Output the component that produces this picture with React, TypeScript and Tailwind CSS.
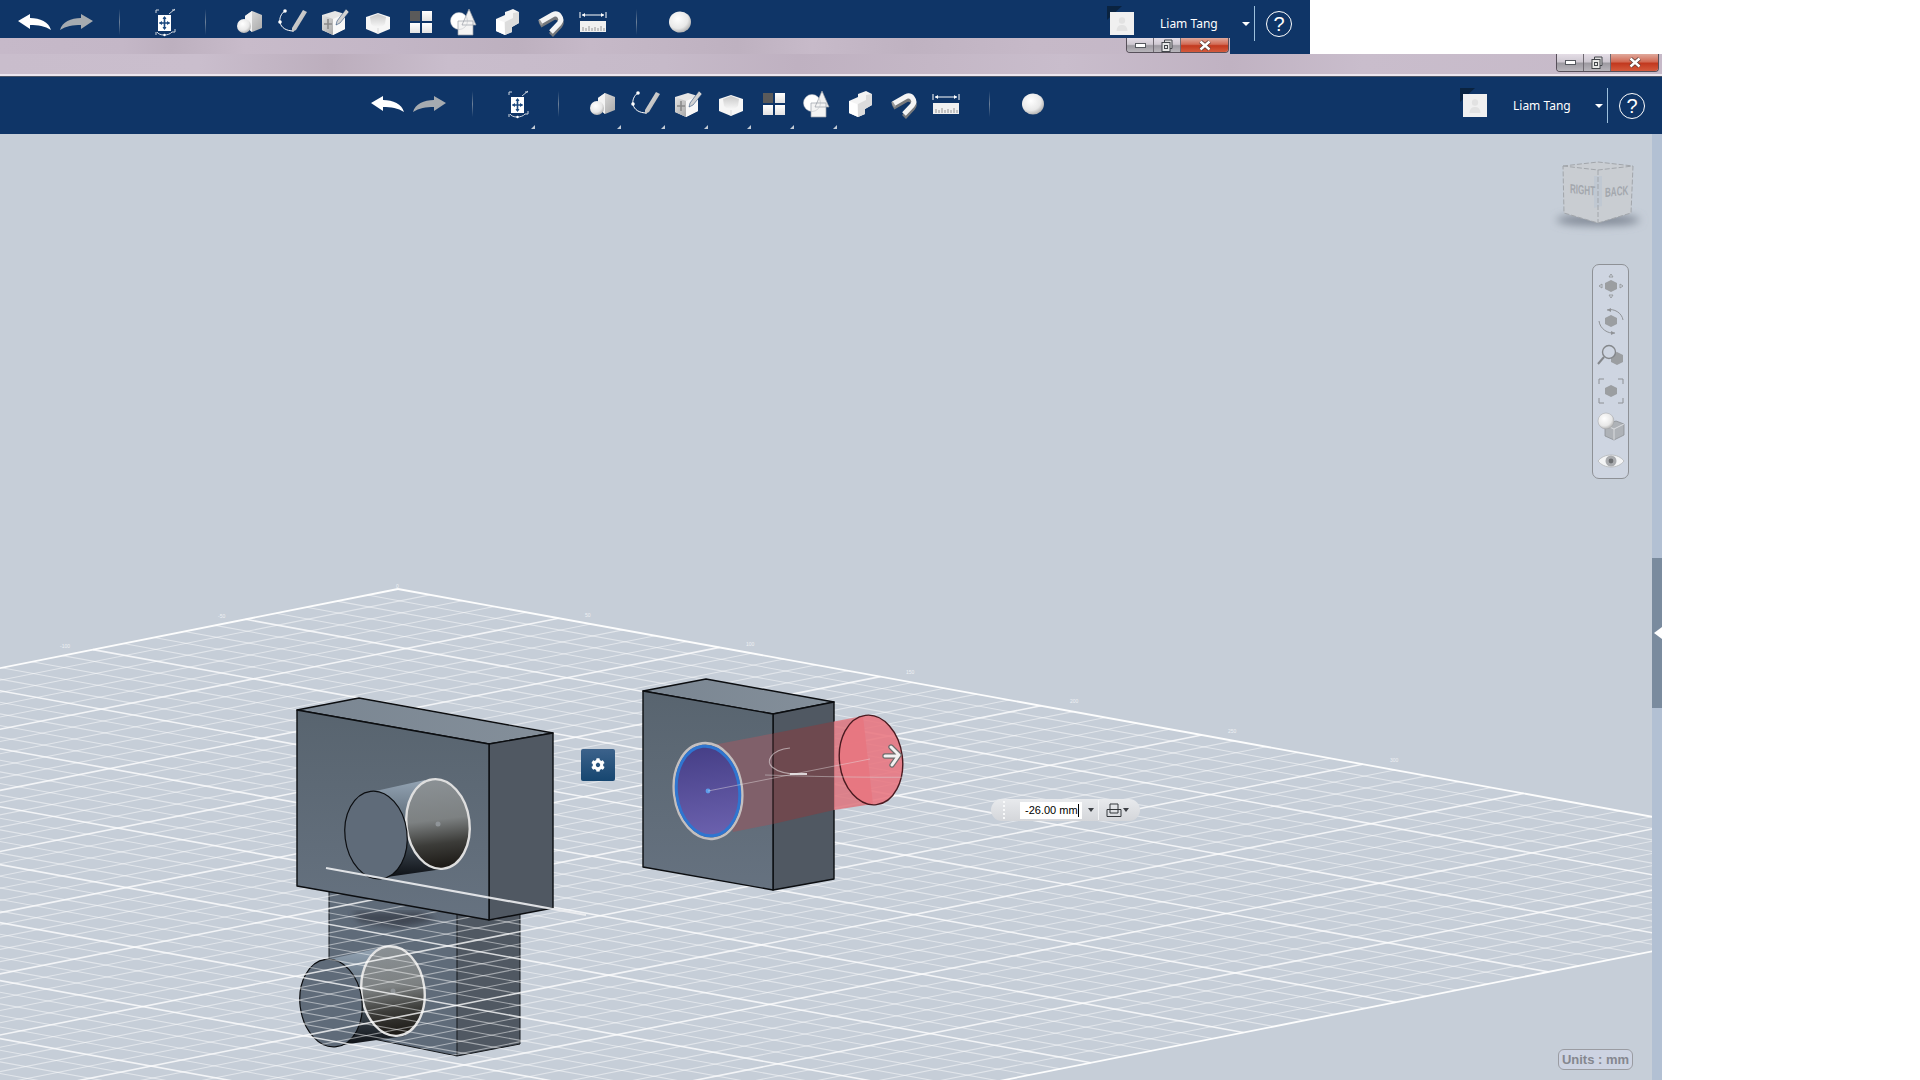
import { FaCog } from "react-icons/fa";

const A = { x: 398, y: 589 };
const U = { x: 160.8, y: 29.2 };
const V = { x: -152.5, y: 30.3 };

function gridPoint(s: number, t: number) {
  return { x: A.x + s * U.x + t * V.x, y: A.y + s * U.y + t * V.y };
}

type GridLine = { x1: number; y1: number; x2: number; y2: number; kind: number };

const gridLines: GridLine[] = [];
for (let i = 0; i <= 50; i++) {
  const kind = i === 0 || i === 50 ? 2 : i % 5 === 0 ? 1 : 0;
  const a = gridPoint(i / 5, 0);
  const b = gridPoint(i / 5, 10);
  gridLines.push({ x1: a.x, y1: a.y, x2: b.x, y2: b.y, kind });
  const c = gridPoint(0, i / 5);
  const d = gridPoint(10, i / 5);
  gridLines.push({ x1: c.x, y1: c.y, x2: d.x, y2: d.y, kind });
}
gridLines.sort((l, r) => l.kind - r.kind);

const gridLabels = [
  { x: 60, y: 648, text: "-100" },
  { x: 218, y: 618, text: "-50" },
  { x: 396, y: 588, text: "0" },
  { x: 585, y: 617, text: "50" },
  { x: 746, y: 646, text: "100" },
  { x: 906, y: 674, text: "150" },
  { x: 1070, y: 703, text: "200" },
  { x: 1228, y: 733, text: "250" },
  { x: 1390, y: 762, text: "300" },
];

function SharedDefs() {
  return (
    <svg className="absolute h-0 w-0">
      <defs>
        <linearGradient id="ico" x1="0" y1="0" x2="0" y2="1">
          <stop offset="0" stopColor="#ffffff" />
          <stop offset="1" stopColor="#e2e2e2" />
        </linearGradient>
        <linearGradient id="icoSide" x1="0" y1="0" x2="1" y2="1">
          <stop offset="0" stopColor="#e4e4e4" />
          <stop offset="1" stopColor="#a8a8a8" />
        </linearGradient>
        <linearGradient id="cavity" x1="0" y1="0" x2="0" y2="1">
          <stop offset="0" stopColor="#c8c8c8" />
          <stop offset="1" stopColor="#f6f6f6" />
        </linearGradient>
        <radialGradient id="ball" cx="0.4" cy="0.35" r="0.7">
          <stop offset="0" stopColor="#ffffff" />
          <stop offset="0.65" stopColor="#e8e8e8" />
          <stop offset="1" stopColor="#a9a9a9" />
        </radialGradient>
      </defs>
    </svg>
  );
}

function Ico({ children }: { children: React.ReactNode }) {
  return (
    <svg width="36" height="36" viewBox="0 0 36 36">
      {children}
    </svg>
  );
}

const UndoIcon = () => (
  <Ico>
    <path d="M2 17L14 10V14C24 14 33 18 35 26C29 22 22 21 14 21V25Z" fill="#ffffff" />
  </Ico>
);

const RedoIcon = () => (
  <Ico>
    <path d="M34 17L22 10V14C12 14 3 18 1 26C7 22 14 21 22 21V25Z" fill="#a6abb0" />
  </Ico>
);

const HomeIcon = () => (
  <Ico>
    <g transform="translate(2 0)">
      <path d="M9 9V6H12M25 6H28M22 10L28 5M28 25V28H25M9 28V31" fill="none" stroke="#cfd6df" strokeWidth="1" />
      <rect x="11" y="11" width="13" height="16" fill="#ffffff" />
      <path d="M17.5 13V25M12.5 19H22.5" stroke="#1d4a80" strokeWidth="1.6" />
      <path d="M17.5 12L15.5 15H19.5ZM17.5 26L15.5 23H19.5ZM12 19L15 17V21ZM23 19L20 17V21Z" fill="#1d4a80" />
      <path d="M10 28C12 32 22 32 25 28" fill="none" stroke="#cfd6df" strokeWidth="1" />
      <circle cx="17.5" cy="31" r="1.2" fill="#ffffff" />
    </g>
  </Ico>
);

const PrimitiveIcon = () => (
  <Ico>
    <path d="M21 7L31 11V24L21 28L14 22V12Z" fill="url(#icoSide)" />
    <path d="M21 7L14 12V22L21 28Z" fill="#f4f4f4" />
    <circle cx="13" cy="22" r="7" fill="url(#ball)" />
  </Ico>
);

const SketchIcon = () => (
  <Ico>
    <path d="M11 7C3 12 3 27 20 27" fill="none" stroke="#ffffff" strokeWidth="1" />
    <circle cx="11" cy="7" r="1.8" fill="#ffffff" />
    <circle cx="6" cy="18" r="1.8" fill="#ffffff" />
    <path d="M29 6L33 8L22 26L18 28L18 24Z" fill="url(#icoSide)" />
  </Ico>
);

const ConstructIcon = () => (
  <Ico>
    <path d="M5 11L18 7L28 10V25L16 31L5 26Z" fill="#e6e6e6" />
    <path d="M5 11L16 15V31L5 26Z" fill="url(#icoSide)" />
    <path d="M16 15L28 10V25L16 31Z" fill="#f8f8f8" />
    <path d="M11 15V25M7 20H15" stroke="#8a8a8a" strokeWidth="1.6" />
    <path d="M29 5L32 8L23 19L19 21L20 17Z" fill="#d2d2d2" stroke="#0f3567" strokeWidth="0.5" />
  </Ico>
);

const ModifyIcon = () => (
  <Ico>
    <path d="M6 13L18 9L30 13V25L18 30L6 25Z" fill="#f6f6f6" />
    <path d="M10 13L18 10L26 13L25 20C22 24 14 24 11 20Z" fill="url(#cavity)" />
    <path d="M18 30V24" stroke="#dadada" strokeWidth="1" />
  </Ico>
);

const PatternIcon = () => (
  <Ico>
    <rect x="7" y="7" width="10" height="10" fill="#5a5a5a" />
    <rect x="19" y="7" width="10" height="10" fill="url(#ico)" />
    <rect x="7" y="19" width="10" height="10" fill="url(#ico)" />
    <rect x="19" y="19" width="10" height="10" fill="url(#ico)" />
  </Ico>
);

const CombineIcon = () => (
  <Ico>
    <circle cx="13" cy="17" r="8.5" fill="#ffffff" />
    <path d="M23 5L30 21H16Z" fill="#f0f0f0" />
    <rect x="12" y="17" width="15" height="14" fill="#f4f4f4" />
    <path d="M23 5L30 21H16ZM12 17H27V31H12Z" fill="none" stroke="#9a9ea6" strokeWidth="0.7" />
    <circle cx="13" cy="17" r="8.5" fill="none" stroke="#b8bcc2" strokeWidth="0.5" />
  </Ico>
);

const GroupIcon = () => (
  <Ico>
    <path d="M6 15L15 11V8L23 5L29 8V19L22 23V28L15 31L6 27Z" fill="#f4f4f4" />
    <path d="M23 9L29 8V19L22 23V28L15 31V18L23 14Z" fill="#dcdcdc" />
    <path d="M6 15L14 18L15 31L6 27Z" fill="#ffffff" />
  </Ico>
);

const SnapIcon = () => (
  <Ico>
    <path d="M7 19L20 11.5A5.5 5.5 0 0 1 26.5 20L18 29" fill="none" stroke="#77797c" strokeWidth="5.5" transform="translate(0 2)" />
    <path d="M7 18L20 10.5A5.5 5.5 0 0 1 26.5 19L18 28" fill="none" stroke="#f4f4f4" strokeWidth="5" />
    <path d="M6 16L9 21" stroke="#9a9a9a" strokeWidth="2" />
  </Ico>
);

const MeasureIcon = () => (
  <Ico>
    <path d="M4 8V14M30 8V14M6 11H28" stroke="#ffffff" strokeWidth="1" />
    <path d="M6 11L9 9V13ZM28 11L25 9V13Z" fill="#ffffff" />
    <rect x="4" y="17" width="26" height="11" fill="#f0f0f0" />
    <path d="M7 27V23M10 27V24M13 27V22M16 27V24M19 27V23M22 27V24M25 27V22M28 27V24" stroke="#7d7d7d" strokeWidth="0.8" />
  </Ico>
);

const MaterialIcon = () => (
  <Ico>
    <ellipse cx="18" cy="18" rx="11" ry="10.5" fill="url(#ball)" />
  </Ico>
);

function Tool({ children, marker }: { children: React.ReactNode; marker?: boolean }) {
  return (
    <div className="relative flex h-full w-[43.1px] shrink-0 items-center justify-center">
      {children}
      {marker && (
        <div className="absolute left-[37px] top-[calc(50%+21px)] h-0 w-0 border-b-[4px] border-l-[4px] border-b-[#c4ccd6] border-l-transparent" />
      )}
    </div>
  );
}

function Sep() {
  return (
    <div className="flex h-full w-[43.1px] shrink-0 items-center justify-center">
      <div className="h-[26px] w-px bg-[linear-gradient(to_bottom,#0f3567,#6c8099_50%,#0f3567)]" />
    </div>
  );
}

function Tools({ markers }: { markers: boolean }) {
  return (
    <>
      <Tool><UndoIcon /></Tool>
      <Tool><RedoIcon /></Tool>
      <Sep />
      <Tool marker={markers}><HomeIcon /></Tool>
      <Sep />
      <Tool marker={markers}><PrimitiveIcon /></Tool>
      <Tool marker={markers}><SketchIcon /></Tool>
      <Tool marker={markers}><ConstructIcon /></Tool>
      <Tool marker={markers}><ModifyIcon /></Tool>
      <Tool marker={markers}><PatternIcon /></Tool>
      <Tool marker={markers}><CombineIcon /></Tool>
      <Tool><GroupIcon /></Tool>
      <Tool><SnapIcon /></Tool>
      <Tool><MeasureIcon /></Tool>
      <Sep />
      <Tool><MaterialIcon /></Tool>
    </>
  );
}

function UserMenu() {
  return (
    <div className="ml-auto flex items-center">
      <div className="relative h-[23px] w-[24px]">
        <div className="absolute -top-[6px] -left-[3px] h-0 w-0 border-t-[14px] border-r-[15px] border-t-[#0a2340] border-r-transparent" />
        <div className="absolute inset-0 flex items-center justify-center bg-[#f0f0f0]">
          <svg width="14" height="18" viewBox="0 0 14 18">
            <circle cx="7" cy="5.5" r="3.2" fill="#e2e2e2" />
            <path d="M1.5 16C2 11 4 10 7 10C10 10 12 11 12.5 16Z" fill="#e2e2e2" />
          </svg>
        </div>
      </div>
      <span className="ml-[26px] w-[60px] whitespace-nowrap font-['Noto_Sans',sans-serif] text-[12px] text-white">
        Liam Tang
      </span>
      <div className="ml-[22px] h-0 w-0 border-x-[4px] border-t-[4px] border-x-transparent border-t-white" />
      <div className="ml-[4px] h-[35px] w-px bg-[#9cc0dc]" />
      <div className="ml-[11px] flex h-[26px] w-[26px] items-center justify-center rounded-full border border-white font-['Liberation_Sans',sans-serif] text-[20px] leading-none text-white">
        ?
      </div>
    </div>
  );
}

function WinButtons({ height }: { height: string }) {
  return (
    <div className={`flex ${height} overflow-hidden rounded-b-[4px] border-x border-b border-[#57505a]`}>
      <div className="flex w-[27px] items-center justify-center border-r border-[#6f6a72] bg-[linear-gradient(to_bottom,#e4dde6,#cfc9d2_45%,#9d9aa1_55%,#b9b6bc)]">
        <div className="h-[5px] w-[11px] border border-[#55585e] bg-white" />
      </div>
      <div className="flex w-[27px] items-center justify-center border-r border-[#6f6a72] bg-[linear-gradient(to_bottom,#e4dde6,#cfc9d2_45%,#9d9aa1_55%,#b9b6bc)]">
        <svg width="12" height="13" viewBox="0 0 12 13">
          <path d="M3.5 3V1H11V9.5H9" fill="#ddd" stroke="#44474c" />
          <rect x="1" y="3.5" width="8" height="9" fill="#e8e8e8" stroke="#44474c" />
          <rect x="3.5" y="6.5" width="3" height="3" fill="none" stroke="#44474c" />
        </svg>
      </div>
      <div className="flex w-[47px] items-center justify-center bg-[linear-gradient(to_bottom,#e0a99c,#d26b55_45%,#c2391f_55%,#d45a3c)]">
        <svg width="14" height="11" viewBox="0 0 14 11">
          <path d="M2.5 1.5L11.5 9.5M11.5 1.5L2.5 9.5" stroke="#5a3a35" strokeWidth="4" />
          <path d="M2.5 1.5L11.5 9.5M11.5 1.5L2.5 9.5" stroke="#ffffff" strokeWidth="2.4" />
        </svg>
      </div>
    </div>
  );
}

function Box({ front, top, right }: { front: string; top: string; right: string }) {
  return (
    <g stroke="#0b0d10" strokeWidth="1.4" strokeLinejoin="round">
      <polygon points={top} fill="url(#boxTop)" />
      <polygon points={right} fill="#505862" />
      <polygon points={front} fill="url(#boxFront)" />
    </g>
  );
}

function Scene() {
  return (
    <svg className="block h-full w-full" viewBox="0 134 1652 946">
      <defs>
        <linearGradient id="boxFront" x1="0" y1="0" x2="0" y2="1">
          <stop offset="0" stopColor="#58646f" />
          <stop offset="1" stopColor="#667280" />
        </linearGradient>
        <linearGradient id="boxTop" x1="0" y1="0" x2="1" y2="0">
          <stop offset="0" stopColor="#7a8692" />
          <stop offset="1" stopColor="#848f9a" />
        </linearGradient>
        <linearGradient id="tube" x1="0" y1="0" x2="0" y2="1">
          <stop offset="0" stopColor="#93a3b3" />
          <stop offset="0.5" stopColor="#55636f" />
          <stop offset="1" stopColor="#0e1116" />
        </linearGradient>
        <linearGradient id="bore" x1="0" y1="0" x2="0" y2="1">
          <stop offset="0" stopColor="#8b9195" />
          <stop offset="0.45" stopColor="#7d8182" />
          <stop offset="0.72" stopColor="#3c3c39" />
          <stop offset="1" stopColor="#1a1713" />
        </linearGradient>
        <linearGradient id="blueFace" x1="0" y1="0" x2="0" y2="1">
          <stop offset="0" stopColor="#463f87" />
          <stop offset="1" stopColor="#6b61ae" />
        </linearGradient>
        <filter id="soft">
          <feGaussianBlur stdDeviation="3" />
        </filter>
      </defs>

      {/* section view below the grid plane */}
      <polygon points="329,880 457,915 457,1056 329,1030" fill="#5f6b79" />
      <polygon points="457,915 520,905 520,1044 457,1056" fill="#505862" />
      <path d="M329 880V1030L457 1056V915M457 1056L520 1044V905" fill="none" stroke="#15181c" strokeWidth="1" />
      <polygon points="352,912 420,912 437,920 400,928 360,922" fill="#3f4653" filter="url(#soft)" />
      <g transform="translate(-45 168)">
        <polygon points="371,792 425,780 450,868 387,877" fill="url(#tube)" />
      </g>
      <ellipse cx="393" cy="991" rx="31.5" ry="45" transform="rotate(-7 393 991)" fill="url(#bore)" stroke="#e2e2e2" strokeWidth="2.4" />
      <circle cx="393" cy="991" r="2.5" fill="#8f9498" />
      <ellipse cx="331" cy="1003" rx="31" ry="44" transform="rotate(-7 331 1003)" fill="#5f6b79" stroke="#0b0d10" strokeWidth="1.2" />

      {gridLines.map((l, i) => (
        <line
          key={i}
          x1={l.x1}
          y1={l.y1}
          x2={l.x2}
          y2={l.y2}
          stroke="#ffffff"
          strokeWidth={l.kind === 0 ? 1.1 : l.kind === 1 ? 1.6 : 1.8}
          strokeOpacity={l.kind === 0 ? 0.48 : l.kind === 1 ? 0.78 : 0.95}
        />
      ))}
      {gridLabels.map((l) => (
        <text key={l.text} x={l.x} y={l.y} fontSize="5" fill="#eef1f4" fontFamily="'Liberation Sans', sans-serif">
          {l.text}
        </text>
      ))}

      {/* left body */}
      <Box
        front="297,710 489,744 489,920 297,886"
        top="297,710 359,698 553,733 489,744"
        right="489,744 553,733 553,908 489,920"
      />
      <polygon points="371,792 425,780 450,868 387,877" fill="url(#tube)" />
      <ellipse cx="438" cy="824" rx="31.5" ry="45" transform="rotate(-7 438 824)" fill="url(#bore)" stroke="#dedede" strokeWidth="2.4" />
      <circle cx="438" cy="824" r="2.5" fill="#8f9498" />
      <ellipse cx="376" cy="835" rx="31" ry="44" transform="rotate(-7 376 835)" fill="#5f6b79" stroke="#0b0d10" strokeWidth="1.2" />
      <line x1="326" y1="868" x2="586" y2="915" stroke="#eef0f2" strokeWidth="2.2" strokeOpacity="0.9" />

      {/* right body with extrude preview */}
      <Box
        front="643,691 773,714 773,890 643,867"
        top="643,691 706,679 834,702 773,714"
        right="773,714 834,702 834,879 773,890"
      />
      <polygon points="713,745 773,733.4 773,824 733,832" fill="#80606a" />
      <polygon points="773,733.4 834,721.6 834,810 773,824" fill="#6e494f" />
      <line x1="773" y1="733" x2="773" y2="824" stroke="#1a1012" strokeWidth="1.2" />
      <polygon points="834,721.6 863,716 873,804 834,810" fill="#dd7680" fillOpacity="0.88" />
      <ellipse cx="871" cy="760" rx="31.5" ry="45" transform="rotate(-7 871 760)" fill="#e8757f" fillOpacity="0.88" stroke="#4a1a20" strokeWidth="1.4" />
      <ellipse cx="708" cy="791" rx="34" ry="48" transform="rotate(-7 708 791)" fill="none" stroke="#c4bfbf" strokeWidth="2.6" />
      <ellipse cx="708" cy="791" rx="31.5" ry="45" transform="rotate(-7 708 791)" fill="url(#blueFace)" stroke="#2f75d0" strokeWidth="3" />
      <circle cx="708" cy="791" r="2.4" fill="#5c9bea" />
      <line x1="708" y1="791" x2="870" y2="759" stroke="#e6dfe2" strokeWidth="1" strokeOpacity="0.45" />
      <path d="M790 748C770 750 766 762 772 767C778 772 788 774 798 774" fill="none" stroke="#e4dde0" strokeWidth="1.2" strokeOpacity="0.6" />
      <line x1="790" y1="774" x2="807" y2="774" stroke="#e8e4e6" strokeWidth="2" strokeOpacity="0.9" />
      <path d="M765 775C800 776 860 778 930 777" fill="none" stroke="#d8d8da" strokeWidth="0.8" strokeOpacity="0.6" />
      <path d="M885 756H898M891 747L899 755L892 765" fill="none" stroke="#6d6d6d" strokeWidth="5.4" strokeLinecap="round" strokeLinejoin="round" />
      <path d="M885 756H898M891 747L899 755L892 765" fill="none" stroke="#f2f2f2" strokeWidth="3" strokeLinecap="round" strokeLinejoin="round" />
    </svg>
  );
}

function ViewCube() {
  return (
    <svg className="absolute left-[1550px] top-[22px]" width="100" height="84" viewBox="0 0 100 84">
      <defs>
        <filter id="cubeShadow" x="-20%" y="-100%" width="140%" height="300%">
          <feGaussianBlur stdDeviation="4" />
        </filter>
      </defs>
      <ellipse cx="48" cy="64" rx="42" ry="5.5" fill="#7f8794" filter="url(#cubeShadow)" />
      <polygon points="13,10 48,6 83,10 81,57 48,67 14,57" fill="#c9cdd2" />
      <polygon points="44,20 52,20 52,50 44,52" fill="#c0c8d2" />
      <path d="M13 10L48 6L83 10L81 57L48 67L14 57ZM13 10L48 14L83 10M48 14V67" fill="none" stroke="#a2a6ab" strokeWidth="1" strokeDasharray="5 2" />
      <text x="0" y="0" transform="translate(20 37) skewY(6) scale(0.62 1)" fontSize="13" fontWeight="700" fill="#a3a7ad" fontFamily="'Liberation Sans', sans-serif">
        RIGHT
      </text>
      <text x="0" y="0" transform="translate(55 41) skewY(-6) scale(0.62 1)" fontSize="13" fontWeight="700" fill="#a3a7ad" fontFamily="'Liberation Sans', sans-serif">
        BACK
      </text>
    </svg>
  );
}

function NavIcon({ children }: { children: React.ReactNode }) {
  return (
    <div className="flex h-[35px] w-full items-center justify-center">
      <svg width="30" height="30" viewBox="0 0 30 30">
        {children}
      </svg>
    </div>
  );
}

const Hex = ({ x, y }: { x: number; y: number }) => (
  <polygon points={`${x},${y - 6} ${x + 6},${y - 3} ${x + 6},${y + 3} ${x},${y + 6} ${x - 6},${y + 3} ${x - 6},${y - 3}`} fill="#9b9ea1" />
);

function NavBar() {
  return (
    <div className="absolute left-[1592px] top-[130px] flex h-[215px] w-[37px] flex-col items-center rounded-[7px] border border-[#8e9196] bg-[#ced5e1] pt-[4px]">
      <NavIcon>
        <Hex x={15} y={15} />
        <path d="M15 3L13 6H17ZM15 27L13 24H17ZM3 15L6 13V17ZM27 15L24 13V17Z" fill="none" stroke="#94979b" strokeWidth="0.9" />
      </NavIcon>
      <NavIcon>
        <Hex x={15} y={15} />
        <path d="M11 4C18 2 26 7 27 14M19 27C12 28 4 23 3 15" fill="none" stroke="#909397" strokeWidth="1" />
        <path d="M11 4L15 2V6ZM19 27L15 25V29Z" fill="#909397" />
      </NavIcon>
      <NavIcon>
        <polygon points="21,11 27,14 27,21 21,24 15,21 15,14" fill="#9b9ea1" />
        <circle cx="13" cy="11" r="6.5" fill="#ced5e1" stroke="#84878b" strokeWidth="1.4" />
        <path d="M8 16L2 23" stroke="#84878b" strokeWidth="2" />
      </NavIcon>
      <NavIcon>
        <Hex x={15} y={15} />
        <path d="M3 8V3H8M22 3H27V8M27 22V27H22M8 27H3V22" fill="none" stroke="#8d9094" strokeWidth="1" />
      </NavIcon>
      <NavIcon>
        <path d="M9 14L20 10L28 13V24L18 29L9 25Z" fill="#aeb2b7" stroke="#8d9094" strokeWidth="0.8" />
        <path d="M18 18V29M18 18L28 13M18 18L9 14" stroke="#e4e6e8" strokeWidth="0.8" />
        <circle cx="10" cy="10" r="8" fill="url(#ball)" stroke="#a2a5a9" strokeWidth="0.5" />
      </NavIcon>
      <NavIcon>
        <path d="M2 15C8 7 22 7 28 15C22 23 8 23 2 15Z" fill="#f3f4f5" stroke="#b2b5b8" strokeWidth="0.8" />
        <circle cx="15" cy="15" r="5.5" fill="#a9abae" />
        <circle cx="15" cy="15" r="2.4" fill="#6d6f72" />
      </NavIcon>
    </div>
  );
}

function DimensionInput() {
  return (
    <div className="absolute left-[991px] top-[665px] flex h-[22px] w-[149px] items-center rounded-full bg-[linear-gradient(to_bottom,#e8eaed,#d4d6da)]">
      <div className="ml-[12px] h-[18px] w-[16px] border-l-2 border-dotted border-[#f8f9fa]" />
      <div className="ml-[1px] flex h-[17px] w-[62px] items-center bg-white pl-[5px] font-['Liberation_Sans',sans-serif] text-[11px] text-black">
        <span>-26.00 mm</span>
        <span className="h-[13px] w-px bg-black" />
      </div>
      <div className="ml-[6px] h-0 w-0 border-x-[3.5px] border-t-[4px] border-x-transparent border-t-[#3c3f44]" />
      <div className="ml-[4px] h-[20px] w-px bg-[#f2f3f5]" />
      <svg className="ml-[7px]" width="16" height="14" viewBox="0 0 16 14">
        <path d="M1 6.5H15V13.5H1ZM4 6V1H12V10H4V6" fill="none" stroke="#33363a" strokeWidth="1" />
      </svg>
      <div className="ml-[1px] h-0 w-0 border-x-[3.5px] border-t-[4px] border-x-transparent border-t-[#3c3f44]" />
    </div>
  );
}

export default function App() {
  return (
    <div className="relative h-[1080px] w-[1920px] overflow-hidden bg-white">
      <SharedDefs />

      {/* window behind */}
      <div className="h-[54px] w-[1310px] bg-[#0f3567]">
        <div className="flex h-[38px] items-center pr-[18px] pl-[12px]">
          <div className="flex h-full pt-[6px]">
            <Tools markers={false} />
          </div>
          <div className="ml-auto pt-[9px]">
            <UserMenu />
          </div>
        </div>
        <div className="flex h-[16px] w-[1230px] justify-end bg-[linear-gradient(92deg,#c6b9c9_0%,#c4b7c7_10%,#bdb0bf_14%,#c8bbca_20%,#c3b6c6_32%,#bdb0bf_42%,#c6b9c8_48%,#beb1c0_60%,#c7bac9_66%,#bfb2c1_74%,#c6b9c8_84%,#c3b6c6_100%)] pr-[1px]">
          <WinButtons height="h-[15px]" />
        </div>
      </div>

      {/* main window */}
      <div className="flex h-[1026px] w-[1662px] flex-col">
        <div className="flex h-[22px] shrink-0 justify-end border-b-2 border-b-[#ece6ee] bg-[linear-gradient(92deg,#c9bdcc_0%,#cabecd_12%,#bcaebd_20%,#c9bdcc_27%,#c6bac9_40%,#bfb1c1_48%,#c4b7c6_56%,#c9bdcc_64%,#c0b2c2_74%,#c9bdcc_82%,#c6b9c8_100%)] pr-[3px]">
          <WinButtons height="h-[18px]" />
        </div>
        <div className="flex h-[58px] shrink-0 items-center border-t border-t-[#4a5568] bg-[#0f3567] pr-[17px] pl-[365px]">
          <div className="flex h-full pb-[3px]">
            <Tools markers />
          </div>
          <UserMenu />
        </div>
        <div className="flex min-h-0 flex-1">
          <div className="relative flex-1 bg-[#c6ced8]">
            <Scene />
            <ViewCube />
            <NavBar />
            <div className="absolute left-[581px] top-[615px] flex h-[32px] w-[34px] items-center justify-center rounded-[2px] bg-[linear-gradient(to_bottom,#3c628b,#164670)] text-[14px] text-white">
              <FaCog />
            </div>
            <DimensionInput />
            <div className="absolute left-[1558px] top-[915px] flex h-[21px] w-[75px] items-center justify-center rounded-[6px] border border-[#9a9ca2] bg-[#cdd3e2] font-['Liberation_Sans',sans-serif] text-[13px] font-bold text-[#85878f]">
              Units : mm
            </div>
          </div>
          <div className="relative w-[10px] shrink-0 bg-[#b2c0d3]">
            <div className="absolute top-[424px] h-[150px] w-full bg-[#7a8b9e]" />
            <div className="absolute top-[493px] left-[2px] h-0 w-0 border-y-[6px] border-r-[8px] border-y-transparent border-r-white" />
          </div>
        </div>
      </div>
    </div>
  );
}
